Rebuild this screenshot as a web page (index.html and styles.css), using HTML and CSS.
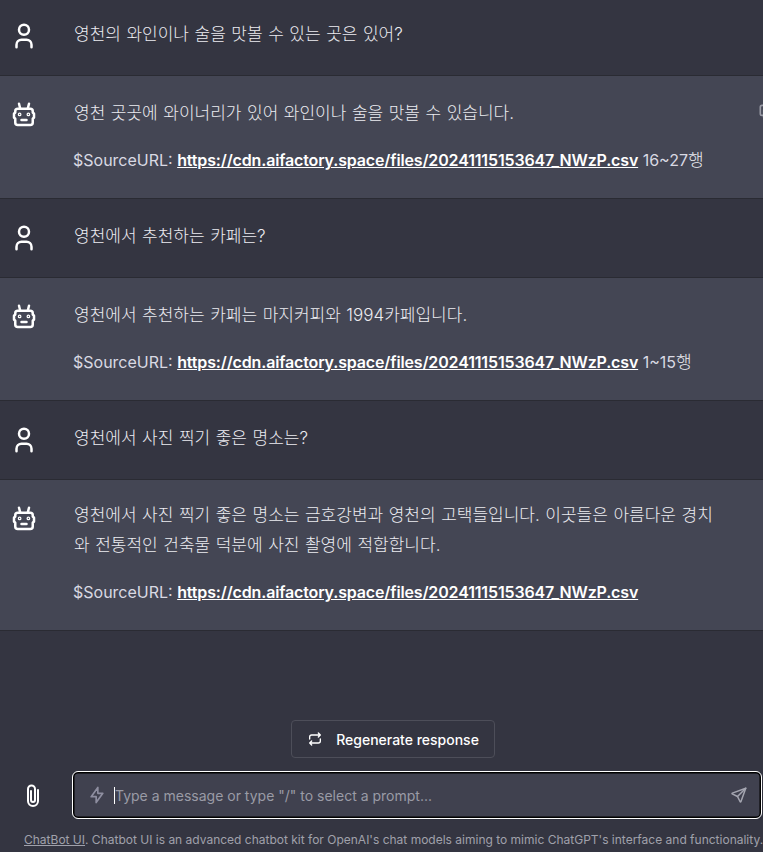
FILE: index.html
```html
<!DOCTYPE html>
<html lang="ko">
<head>
    <meta charset="UTF-8">
    <meta name="viewport" content="width=device-width, initial-scale=1.0">
    <title>Chatbot UI</title>
    <link rel="stylesheet" href="styles.css">
</head>
<body>
    <svg class="icon-defs" width="0" height="0">
        <symbol id="iconUser" viewBox="0 0 24 24">
            <circle cx="12" cy="7" r="4"></circle>
            <path d="M6 21v-2a4 4 0 0 1 4-4h4a4 4 0 0 1 4 4v2"></path>
        </symbol>
        <symbol id="iconRobot" viewBox="0 0 24 24">
            <path d="M7 7h10a2 2 0 0 1 2 2v1l1 1v3l-1 1v3a2 2 0 0 1-2 2h-10a2 2 0 0 1-2-2v-3l-1-1v-3l1-1v-1a2 2 0 0 1 2-2z"></path>
            <path d="M10 16h4"></path>
            <circle cx="8.5" cy="11.5" r=".5"></circle>
            <circle cx="15.5" cy="11.5" r=".5"></circle>
            <path d="M9 7l-1-4"></path>
            <path d="M15 7l1-4"></path>
        </symbol>
        <symbol id="iconCopy" viewBox="0 0 24 24">
            <path d="M8 8m0 2a2 2 0 0 1 2-2h8a2 2 0 0 1 2 2v8a2 2 0 0 1-2 2h-8a2 2 0 0 1-2-2z"></path>
            <path d="M16 8v-2a2 2 0 0 0-2-2h-8a2 2 0 0 0-2 2v8a2 2 0 0 0 2 2h2"></path>
        </symbol>
    </svg>

    <div class="app">
        <div class="chat-list">
            <div class="message">
                <svg class="avatar"><use href="#iconUser"></use></svg>
                <div class="message-body">
                    <p class="ko">영천의 와인이나 술을 맛볼 수 있는 곳은 있어?</p>
                </div>
            </div>
            <div class="message bot">
                <svg class="avatar"><use href="#iconRobot"></use></svg>
                <div class="message-body">
                    <p class="ko">영천 곳곳에 와이너리가 있어 와인이나 술을 맛볼 수 있습니다.</p>
                    <p>$SourceURL: <a href="#">https://cdn.aifactory.space/files/20241115153647_NWzP.csv</a> 16~27<span class="ko">행</span></p>
                </div>
                <svg class="copy-icon"><use href="#iconCopy"></use></svg>
            </div>
            <div class="message">
                <svg class="avatar"><use href="#iconUser"></use></svg>
                <div class="message-body">
                    <p class="ko">영천에서 추천하는 카페는?</p>
                </div>
            </div>
            <div class="message bot">
                <svg class="avatar"><use href="#iconRobot"></use></svg>
                <div class="message-body">
                    <p class="ko">영천에서 추천하는 카페는 마지커피와 1994카페입니다.</p>
                    <p>$SourceURL: <a href="#">https://cdn.aifactory.space/files/20241115153647_NWzP.csv</a> 1~15<span class="ko">행</span></p>
                </div>
            </div>
            <div class="message">
                <svg class="avatar"><use href="#iconUser"></use></svg>
                <div class="message-body">
                    <p class="ko">영천에서 사진 찍기 좋은 명소는?</p>
                </div>
            </div>
            <div class="message bot last">
                <svg class="avatar"><use href="#iconRobot"></use></svg>
                <div class="message-body">
                    <p class="ko">영천에서 사진 찍기 좋은 명소는 금호강변과 영천의 고택들입니다. 이곳들은 아름다운 경치와 전통적인 건축물 덕분에 사진 촬영에 적합합니다.</p>
                    <p>$SourceURL: <a href="#">https://cdn.aifactory.space/files/20241115153647_NWzP.csv</a></p>
                </div>
            </div>
        </div>

        <div class="composer">
            <button class="regen-button">
                <svg class="regen-icon" viewBox="0 0 24 24">
                    <path d="M4 12v-3a3 3 0 0 1 3-3h13m-3-3l3 3l-3 3"></path>
                    <path d="M20 12v3a3 3 0 0 1-3 3h-13m3 3l-3-3l3-3"></path>
                </svg>
                Regenerate response
            </button>
            <div class="input-row">
                <svg class="clip-icon" viewBox="0 0 24 24">
                    <path d="M10 8v9a2 2 0 0 0 4 0V6a3.500 3.500 0 0 0-7 0v12a5 5 0 0 0 10 0V7"></path>
                </svg>
                <div class="input-box">
                    <svg class="bolt-icon" viewBox="0 0 24 24">
                        <path d="M13 3v7h6l-8 11v-7h-6l8-11"></path>
                    </svg>
                    <span class="caret"></span>
                    <span class="placeholder">Type a message or type "/" to select a prompt...</span>
                    <svg class="send-icon" viewBox="0 0 24 24">
                        <path d="M10 14l11-11"></path>
                        <path d="M21 3l-6.500 18a.55 .55 0 0 1-1 0l-3.500-7l-7-3.500a.55 .55 0 0 1 0-1l18-6.500"></path>
                    </svg>
                </div>
            </div>
            <p class="footer-note"><a href="#">ChatBot UI</a>. Chatbot UI is an advanced chatbot kit for OpenAI's chat models aiming to mimic ChatGPT's interface and functionality.</p>
        </div>
    </div>
</body>
</html>
```

FILE: styles.css
```css
* {
    box-sizing: border-box;
}

html, body {
    height: 100%;
}

body {
    margin: 0;
    background: #343541;
    color: #d9d9e3;
    font-family: 'Inter', 'Noto Sans CJK KR', sans-serif;
    font-size: 16px;
    overflow: hidden;
}

svg {
    fill: none;
    stroke: currentColor;
    stroke-width: 2;
    stroke-linecap: round;
    stroke-linejoin: round;
    flex-shrink: 0;
}

.icon-defs {
    position: absolute;
}

.app {
    height: 100%;
    display: flex;
    flex-direction: column;
    justify-content: space-between;
}

.chat-list {
    margin-top: -3.5px;
}

.message {
    position: relative;
    display: flex;
    gap: 35px;
    padding: 24px 42px 24.5px 9px;
    border-bottom: 1px solid #2a2b33;
}

.message.bot {
    background: #444654;
}

.avatar {
    width: 30px;
    height: 30px;
    color: #fff;
}

.message-body {
    flex: 1;
    margin: -2px 0;
    line-height: 30px;
}

.bot.last .message-body {
    margin-top: -4px;
}

.message-body p {
    margin: 0;
}

.message-body p + p {
    margin: 17px 0 0 -1px;
}

.message-body a {
    color: #fff;
    font-weight: 600;
    letter-spacing: -0.15px;
}

.ko {
    color: #ececf1;
    font-size: 17px;
    font-weight: 300;
    word-spacing: 0.75px;
}

.copy-icon {
    position: absolute;
    top: 26px;
    right: -14px;
    width: 20px;
    height: 20px;
    color: #9a9ba6;
}

.composer {
    display: flex;
    flex-direction: column;
    align-items: center;
}

.regen-button {
    display: flex;
    align-items: center;
    gap: 13px;
    height: 38px;
    padding: 0 15.5px;
    margin: 0 0 13px 23px;
    background: #343541;
    border: 1px solid #4d4e59;
    border-radius: 4px;
    color: #fff;
    font-family: inherit;
    font-size: 14px;
    font-weight: 500;
}

.regen-icon {
    width: 16px;
    height: 16px;
}

.input-row {
    width: 100%;
    display: flex;
    align-items: center;
    padding-right: 1px;
}

.clip-icon {
    width: 24px;
    height: 24px;
    margin: 0 27px 0 21px;
    color: #fff;
}

.input-box {
    flex: 1;
    height: 48px;
    display: flex;
    align-items: center;
    padding: 0 13px 0 14px;
    background: #40414f;
    border: 1px solid #fff;
    border-radius: 6px;
    box-shadow: inset 0 0 0 1.5px #000;
}

.bolt-icon {
    width: 20px;
    height: 20px;
    margin-right: 7px;
    color: #8e8ea0;
}

.caret {
    width: 1px;
    height: 17px;
    background: #fff;
}

.placeholder {
    flex: 1;
    color: #9a9ba6;
    font-size: 14px;
}

.send-icon {
    width: 18px;
    height: 18px;
    color: #a4a5b0;
}

.footer-note {
    width: 100%;
    margin: 13px 0 4px;
    padding-left: 24px;
    white-space: nowrap;
    color: #a0a1ab;
    font-size: 12px;
    line-height: 16px;
}

.footer-note a {
    color: #a0a1ab;
}
```
